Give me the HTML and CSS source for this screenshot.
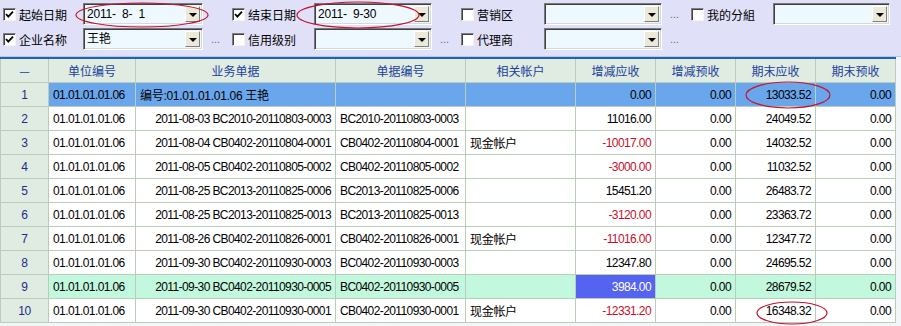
FILE: index.html
```html
<!DOCTYPE html>
<html lang="zh-CN">
<head>
  <meta charset="UTF-8">
  <title>应收明细</title>
  <link rel="stylesheet" href="styles.css">
</head>
<body>
  <div class="filters">
    <div class="row">
      <span class="chk"><svg viewBox="0 0 11 11"><path d="M2 5 L4.3 7.6 L9 2.6" /></svg></span>
      <label class="lbl a">起始日期</label>
      <span class="combo w1"><span class="val">2011-  8-  1</span><span class="btn"></span></span>
      <span class="dots"></span>
      <span class="chk"><svg viewBox="0 0 11 11"><path d="M2 5 L4.3 7.6 L9 2.6" /></svg></span>
      <label class="lbl">结束日期</label>
      <span class="combo"><span class="val">2011-  9-30</span><span class="btn"></span></span>
      <span class="dots"></span>
      <span class="chk"></span>
      <label class="lbl c">营销区</label>
      <span class="combo"><span class="val"></span><span class="btn"></span></span>
      <span class="dots">...</span>
      <span class="chk"></span>
      <label class="lbl">我的分組</label>
      <span class="combo w4"><span class="val"></span><span class="btn"></span></span>
    </div>
    <div class="row">
      <span class="chk"><svg viewBox="0 0 11 11"><path d="M2 5 L4.3 7.6 L9 2.6" /></svg></span>
      <label class="lbl a">企业名称</label>
      <span class="combo w1"><span class="val">王艳</span><span class="btn"></span></span>
      <span class="dots">...</span>
      <span class="chk"></span>
      <label class="lbl">信用级别</label>
      <span class="combo"><span class="val"></span><span class="btn"></span></span>
      <span class="dots">...</span>
      <span class="chk"></span>
      <label class="lbl c">代理商</label>
      <span class="combo"><span class="val"></span><span class="btn"></span></span>
      <span class="dots">...</span>
    </div>
  </div>

  <div class="grid">
    <table>
      <colgroup>
        <col style="width:48px"><col style="width:87px"><col style="width:200px"><col style="width:130px">
        <col style="width:110px"><col style="width:80px"><col style="width:80px"><col style="width:80px"><col style="width:80px">
      </colgroup>
      <thead>
        <tr>
          <th>—</th><th>单位编号</th><th>业务单据</th><th>单据编号</th><th>相关帐户</th>
          <th>增减应收</th><th>增减预收</th><th>期末应收</th><th>期末预收</th>
        </tr>
      </thead>
      <tbody>
        <tr class="sel">
          <th>1</th><td>01.01.01.01.06</td><td class="title">编号:01.01.01.01.06 王艳</td><td></td><td></td>
          <td class="num">0.00</td><td class="num">0.00</td><td class="num">13033.52</td><td class="num">0.00</td>
        </tr>
        <tr>
          <th>2</th><td>01.01.01.01.06</td><td class="doc">2011-08-03 BC2010-20110803-0003</td><td>BC2010-20110803-0003</td><td></td>
          <td class="num">11016.00</td><td class="num">0.00</td><td class="num">24049.52</td><td class="num">0.00</td>
        </tr>
        <tr>
          <th>3</th><td>01.01.01.01.06</td><td class="doc">2011-08-04 CB0402-20110804-0001</td><td>CB0402-20110804-0001</td><td class="cn">现金帐户</td>
          <td class="num neg">-10017.00</td><td class="num">0.00</td><td class="num">14032.52</td><td class="num">0.00</td>
        </tr>
        <tr>
          <th>4</th><td>01.01.01.01.06</td><td class="doc">2011-08-05 CB0402-20110805-0002</td><td>CB0402-20110805-0002</td><td></td>
          <td class="num neg">-3000.00</td><td class="num">0.00</td><td class="num">11032.52</td><td class="num">0.00</td>
        </tr>
        <tr>
          <th>5</th><td>01.01.01.01.06</td><td class="doc">2011-08-25 BC2013-20110825-0006</td><td>BC2013-20110825-0006</td><td></td>
          <td class="num">15451.20</td><td class="num">0.00</td><td class="num">26483.72</td><td class="num">0.00</td>
        </tr>
        <tr>
          <th>6</th><td>01.01.01.01.06</td><td class="doc">2011-08-25 BC2013-20110825-0013</td><td>BC2013-20110825-0013</td><td></td>
          <td class="num neg">-3120.00</td><td class="num">0.00</td><td class="num">23363.72</td><td class="num">0.00</td>
        </tr>
        <tr>
          <th>7</th><td>01.01.01.01.06</td><td class="doc">2011-08-26 CB0402-20110826-0001</td><td>CB0402-20110826-0001</td><td class="cn">现金帐户</td>
          <td class="num neg">-11016.00</td><td class="num">0.00</td><td class="num">12347.72</td><td class="num">0.00</td>
        </tr>
        <tr>
          <th>8</th><td>01.01.01.01.06</td><td class="doc">2011-09-30 BC0402-20110930-0003</td><td>BC0402-20110930-0003</td><td></td>
          <td class="num">12347.80</td><td class="num">0.00</td><td class="num">24695.52</td><td class="num">0.00</td>
        </tr>
        <tr class="mint">
          <th>9</th><td>01.01.01.01.06</td><td class="doc">2011-09-30 BC0402-20110930-0005</td><td>BC0402-20110930-0005</td><td></td>
          <td class="num focus">3984.00</td><td class="num">0.00</td><td class="num">28679.52</td><td class="num">0.00</td>
        </tr>
        <tr>
          <th>10</th><td>01.01.01.01.06</td><td class="doc">2011-09-30 CB0402-20110930-0001</td><td>CB0402-20110930-0001</td><td class="cn">现金帐户</td>
          <td class="num neg">-12331.20</td><td class="num">0.00</td><td class="num">16348.32</td><td class="num">0.00</td>
        </tr>
      </tbody>
    </table>
  </div>

  <svg class="marks" viewBox="0 0 901 326">
    <ellipse cx="142" cy="15" rx="66" ry="12" />
    <ellipse cx="358" cy="15" rx="61" ry="13" />
    <ellipse cx="788" cy="95" rx="42" ry="13" />
    <ellipse cx="792" cy="313" rx="35" ry="11" />
  </svg>
</body>
</html>
```

FILE: styles.css
```css
body {
  margin: 0;
  width: 901px;
  height: 326px;
  overflow: hidden;
  position: relative;
  background: #f2f6f8;
  font-family: "Liberation Sans", "Noto Sans CJK SC", sans-serif;
  font-size: 12px;
  color: #000;
}
.filters {
  background: #e0e0f8;
  height: 56px;
  padding-top: 3px;
  box-sizing: border-box;
}
.row {
  display: flex;
  align-items: center;
  height: 22px;
  margin-bottom: 3px;
  padding-left: 3px;
}
.chk {
  width: 11px;
  height: 11px;
  flex: none;
  background: #fff;
  border: 1px solid;
  border-color: #808080 #f4f4f4 #f4f4f4 #808080;
  box-shadow: inset 1px 1px 0 #404040;
}
.chk svg {
  display: block;
  width: 11px;
  height: 11px;
}
.chk svg path {
  fill: none;
  stroke: #000;
  stroke-width: 1.8;
}
.lbl {
  width: 66px;
  margin-left: 3px;
  font-family: "Noto Sans CJK SC", sans-serif;
  font-size: 12px;
  flex: none;
}
.lbl.a {
  width: 64px;
}
.lbl.c {
  width: 67px;
}
.combo {
  width: 118px;
  height: 22px;
  box-sizing: border-box;
  flex: none;
  display: flex;
  background: #eef8ff;
  border: 1px solid;
  border-color: #7a7a7a #ffffff #ffffff #7a7a7a;
  box-shadow: inset 1px 1px 0 #404040, inset -1px -1px 0 #d8d8d8;
  padding: 2px;
}
.combo.w1 {
  width: 120px;
}
.combo.w4 {
  width: 117px;
}
.val {
  flex: 1;
  white-space: pre;
  font-family: "Liberation Sans", "Noto Sans CJK SC", sans-serif;
  font-size: 12px;
  letter-spacing: -0.2px;
  line-height: 16px;
  padding-left: 1px;
  overflow: hidden;
}
.btn {
  width: 15px;
  flex: none;
  box-sizing: border-box;
  background: #ece9d8;
  border: 1px solid;
  border-color: #fff #808080 #808080 #fff;
  position: relative;
}
.btn::after {
  content: "";
  position: absolute;
  left: 3px;
  top: 6px;
  border-left: 4px solid transparent;
  border-right: 4px solid transparent;
  border-top: 4px solid #000;
}
.dots {
  width: 29px;
  flex: none;
  color: #6a6a80;
  font-size: 11px;
  text-align: left;
  padding-left: 8px;
  box-sizing: border-box;
}
.grid {
  border-top: 1px solid #b8c8e8;
}
.grid table {
  border-top: 2px solid #2262ac;
  border-collapse: collapse;
  table-layout: fixed;
  width: 896px;
  background: #fff;
}
.grid th,
.grid td {
  height: 23px;
  padding: 0 3px;
  border: 1px solid #b9cdb9;
  white-space: nowrap;
  overflow: hidden;
  font-weight: normal;
}
.grid thead th {
  background: #e0ebe2;
  color: #1a3f9c;
  font-family: "Noto Sans CJK SC", sans-serif;
  text-align: center;
}
.grid tbody th {
  background: #e0ebe2;
  color: #1b2d86;
  text-align: center;
  letter-spacing: -0.3px;
}
.grid td {
  text-align: left;
  padding-left: 4px;
  letter-spacing: -0.6px;
}
.grid td.cn,
.grid td.title {
  letter-spacing: -0.3px;
}
.grid td.doc,
.grid td.num {
  text-align: right;
  padding-right: 4px;
}
.grid td.neg {
  color: #c8102a;
}
.grid tr.sel td {
  background: #6aa6ec;
}
.grid tr.mint td {
  background: #c2f8de;
}
.grid tr.mint td.focus {
  background: #5464f0;
  color: #fff;
}
.marks {
  position: absolute;
  left: 0;
  top: 0;
  width: 901px;
  height: 326px;
  pointer-events: none;
}
.marks ellipse {
  fill: none;
  stroke: #c4142c;
  stroke-width: 1.2;
}
```
